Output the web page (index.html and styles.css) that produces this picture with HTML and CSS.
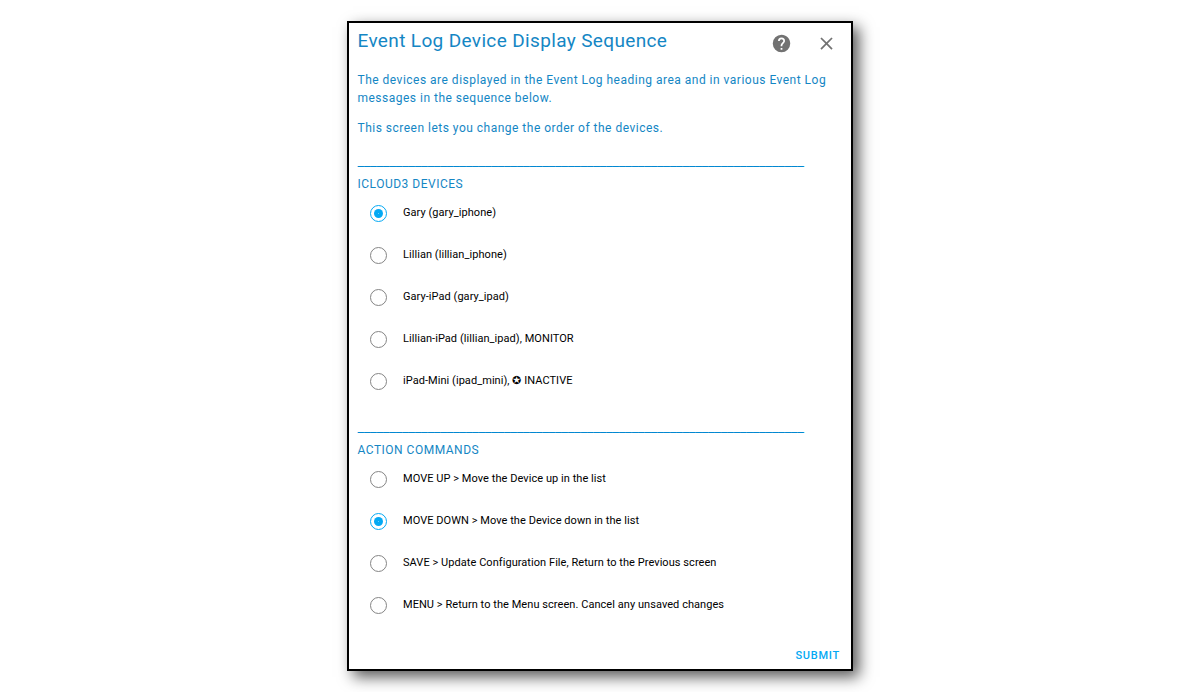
FILE: index.html
```html
<!DOCTYPE html>
<html lang="en">
<head>
<meta charset="utf-8">
<title>Event Log Device Display Sequence</title>
<link rel="stylesheet" href="styles.css">
</head>
<body>
<main class="dialog">
  <header class="header">
    <h1 class="title">Event Log Device Display Sequence</h1>
    <svg class="icon help" viewBox="0 0 24 24"><path d="M15.07,11.25L14.17,12.17C13.45,12.89 13,13.5 13,15H11V14.5C11,13.39 11.45,12.39 12.17,11.67L13.41,10.41C13.78,10.05 14,9.55 14,9C14,7.89 13.1,7 12,7A2,2 0 0,0 10,9H8A4,4 0 0,1 12,5A4,4 0 0,1 16,9C16,9.88 15.64,10.67 15.07,11.25M13,19H11V17H13M12,2A10,10 0 0,0 2,12A10,10 0 0,0 12,22A10,10 0 0,0 22,12C22,6.47 17.5,2 12,2Z"/></svg>
    <svg class="icon close" viewBox="0 0 24 24"><path d="M19,6.41L17.59,5L12,10.59L6.41,5L5,6.41L10.59,12L5,17.59L6.41,19L12,13.41L17.59,19L19,17.59L13.41,12L19,6.41Z"/></svg>
  </header>
  <div class="intro">
    <p>The devices are displayed in the Event Log heading area and in various Event Log messages in the sequence below.</p>
    <p>This screen lets you change the order of the devices.</p>
  </div>
  <section class="group">
    <div class="rule">______________________________________________________________________</div>
    <h2 class="legend">ICLOUD3 DEVICES</h2>
    <div class="option"><span class="radio checked"></span><span class="label">Gary (gary_iphone)</span></div>
    <div class="option"><span class="radio"></span><span class="label">Lillian (lillian_iphone)</span></div>
    <div class="option"><span class="radio"></span><span class="label">Gary-iPad (gary_ipad)</span></div>
    <div class="option"><span class="radio"></span><span class="label">Lillian-iPad (lillian_ipad), MONITOR</span></div>
    <div class="option"><span class="radio"></span><span class="label">iPad-Mini (ipad_mini), <span class="star">✪</span> INACTIVE</span></div>
  </section>
  <section class="group">
    <div class="rule">______________________________________________________________________</div>
    <h2 class="legend">ACTION COMMANDS</h2>
    <div class="option"><span class="radio"></span><span class="label">MOVE UP &gt; Move the Device up in the list</span></div>
    <div class="option"><span class="radio checked"></span><span class="label">MOVE DOWN &gt; Move the Device down in the list</span></div>
    <div class="option"><span class="radio"></span><span class="label">SAVE &gt; Update Configuration File, Return to the Previous screen</span></div>
    <div class="option"><span class="radio"></span><span class="label">MENU &gt; Return to the Menu screen. Cancel any unsaved changes</span></div>
  </section>
  <footer class="footer"><span class="submit">SUBMIT</span></footer>
</main>
</body>
</html>
```
FILE: styles.css
```css
* { box-sizing: border-box; }
body {
  margin: 0;
  height: 692px;
  padding: 21px 0 0 347px;
  background: #fff;
  font-family: Roboto, sans-serif;
  overflow: hidden;
}
.dialog {
  width: 506px;
  height: 650px;
  padding: 0 11px 0 8.5px;
  border: 2px solid #000;
  background: #fff;
  box-shadow: 6px 6px 14px rgba(0, 0, 0, 0.65);
  color: #1486c4;
}
.header {
  display: flex;
  height: 48px;
}
.title {
  flex: 1;
  margin: 4px 0 0;
  font-size: 19px;
  line-height: 28px;
  font-weight: 400;
  letter-spacing: 0.36px;
}
.icon {
  width: 21px;
  height: 21px;
  margin-top: 10px;
  fill: #727272;
}
.close { margin: 10px 3px 0 24px; }
.intro {
  height: 83px;
  font-size: 12px;
  line-height: 18px;
  letter-spacing: 0.49px;
}
.intro p { margin: 0 0 12px; }
.group { height: 266px; }
.rule {
  height: 21px;
  font-size: 14px;
  line-height: 14px;
  letter-spacing: 0.06px;
  white-space: nowrap;
  color: #0288d1;
  -webkit-text-stroke: 0.3px #0288d1;
  /* keep the underscores to a single pixel row */
  clip-path: inset(12px 0 8px 0);
}
.legend {
  margin: 0;
  height: 17px;
  font-size: 12px;
  line-height: 18px;
  font-weight: 400;
  letter-spacing: 0.5px;
}
.option {
  display: flex;
  align-items: center;
  height: 42px;
  padding-left: 12.5px;
}
.radio {
  display: flex;
  align-items: center;
  justify-content: center;
  width: 17px;
  height: 17px;
  border: 1px solid #858585;
  border-radius: 50%;
}
.radio.checked { border: 1.4px solid #03a9f4; }
.radio.checked::after {
  content: "";
  width: 9px;
  height: 9px;
  border-radius: 50%;
  background: radial-gradient(circle, #68ccf8 0 0.7px, #03a9f4 1px);
}
.label {
  margin: 0 0 1px 16px;
  color: #000;
  font-size: 11px;
  line-height: 16px;
  letter-spacing: 0.055px;
}
.star { font-size: 11px; line-height: 1; }
.footer {
  display: flex;
  justify-content: flex-end;
  margin-top: -38px;
}
.submit {
  font-size: 11px;
  line-height: 16px;
  font-weight: 500;
  letter-spacing: 0.75px;
  color: #03a9f4;
}
```
